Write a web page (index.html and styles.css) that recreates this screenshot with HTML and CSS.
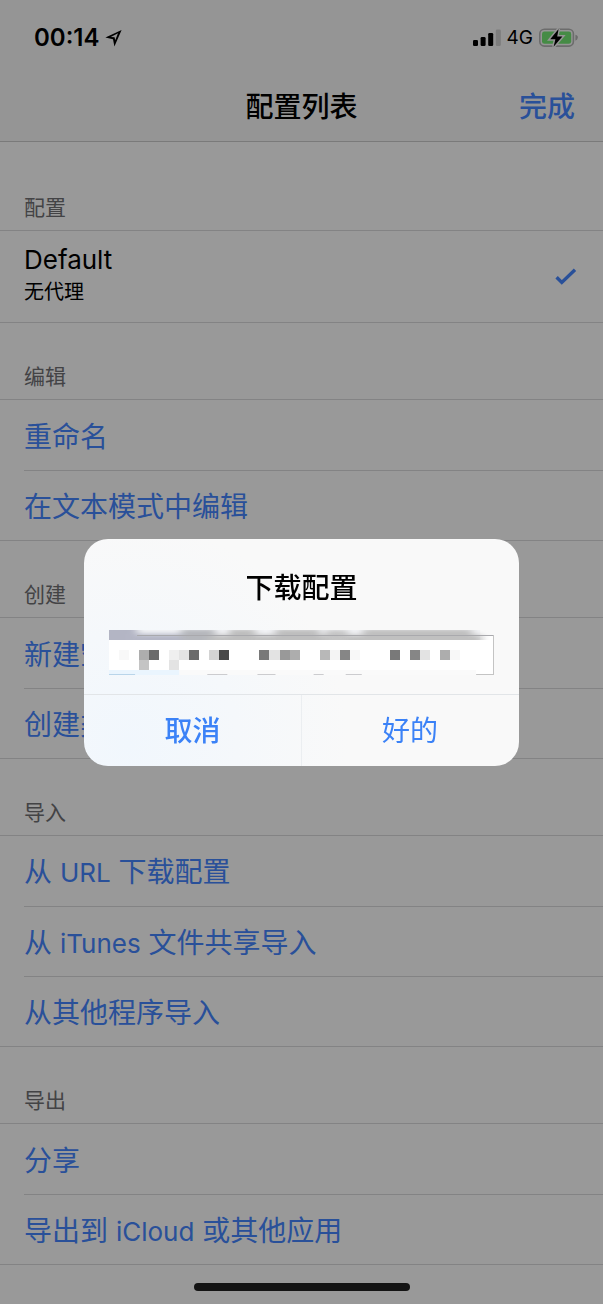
FILE: index.html
```html
<!DOCTYPE html>
<html lang="zh-CN">
<head>
<meta charset="utf-8">
<meta name="viewport" content="width=device-width, initial-scale=1">
<title>配置列表</title>
<link rel="stylesheet" href="styles.css">
</head>
<body>
<div class="screen">
  <header class="header">
    <div class="status">
      <div class="status-left">
        <span class="time">00:14</span>
        <svg class="icon-location" viewBox="0 0 18 18" aria-hidden="true"><path fill-rule="evenodd" d="M16.6 1 9.4 17.6 8 10.2 0.4 8.6ZM13 4.2 5.8 8 9.6 8.3 10.2 11.2Z"/></svg>
      </div>
      <div class="status-right">
        <svg class="icon-signal" viewBox="0 0 28 17" aria-hidden="true"><rect x="0" y="11" width="5" height="6" rx="1.3"/><rect x="7.6" y="8" width="5" height="9" rx="1.3"/><rect x="15.2" y="4" width="5" height="13" rx="1.3"/><rect class="signal-off" x="22.8" y="0.5" width="5" height="16.5" rx="1.3"/></svg>
        <span class="network">4G</span>
        <svg class="icon-battery" viewBox="0 0 40 20" aria-hidden="true"><rect class="battery-case" x="0.8" y="1.3" width="33.6" height="16.8" rx="4.5"/><rect class="battery-fill" x="3" y="3.6" width="29.2" height="12.2" rx="2.4"/><path class="battery-tip" d="M36.4 6.8q3 .8 2.4 3-.1 2-2.4 3Z"/><path class="battery-bolt" d="M19.6 1 11.2 11.2h5.2L14.6 18.8 23.4 8.4h-5.2Z"/></svg>
      </div>
    </div>
    <nav class="navbar">
      <h1 class="title">配置列表</h1>
      <button class="done" type="button">完成</button>
    </nav>
  </header>

  <main>
    <section>
      <h2 class="label label-first">配置</h2>
      <div class="group">
        <button class="profile" type="button" aria-pressed="true">
          <span class="profile-text"><span class="profile-name">Default</span><span class="profile-detail">无代理</span></span>
          <svg class="icon-check" viewBox="0 0 22 18" aria-hidden="true"><path d="M1.6 9.2 6.8 14.4 20 1.8"/></svg>
        </button>
      </div>
    </section>
    <section>
      <h2 class="label">编辑</h2>
      <div class="group">
        <button class="row" type="button">重命名</button>
        <button class="row" type="button">在文本模式中编辑</button>
      </div>
    </section>
    <section>
      <h2 class="label">创建</h2>
      <div class="group">
        <button class="row" type="button">新建空</button>
        <button class="row" type="button">创建类</button>
      </div>
    </section>
    <section>
      <h2 class="label">导入</h2>
      <div class="group">
        <button class="row" type="button">从 <span class="latin">URL</span> 下载配置</button>
        <button class="row" type="button">从 <span class="latin">iTunes</span> 文件共享导入</button>
        <button class="row" type="button">从其他程序导入</button>
      </div>
    </section>
    <section>
      <h2 class="label">导出</h2>
      <div class="group">
        <button class="row" type="button">分享</button>
        <button class="row" type="button">导出到 <span class="latin">iCloud</span> 或其他应用</button>
      </div>
    </section>
  </main>
</div>

<div class="overlay">
  <form class="alert" role="dialog" aria-labelledby="alert-title">
    <div class="alert-body">
      <h2 class="alert-title" id="alert-title">下载配置</h2>
      <div class="field">
        <input class="field-input" type="text" aria-labelledby="alert-title">
        <svg class="mosaic" viewBox="0 0 383 45" preserveAspectRatio="none" aria-hidden="true">
          <defs>
            <filter id="soft" x="-10%" y="-50%" width="120%" height="200%"><feGaussianBlur stdDeviation="4 2"/></filter>
            <clipPath id="band"><rect width="383" height="10"/></clipPath>
          </defs>
          <g clip-path="url(#band)">
            <rect width="370" height="10" fill="#f2f3f6"/>
            <g filter="url(#soft)">
              <rect x="-10" y="-6" width="38" height="24" fill="#b3b5c4"/>
              <rect x="20" y="4" width="60" height="14" fill="#b5b7c6"/>
              <rect x="72" y="-1" width="34" height="19" fill="#b5b7bc"/>
              <rect x="100" y="5" width="272" height="13" fill="#c0c0c0"/>
              <rect x="120" y="-1" width="26" height="19" fill="#bebebe"/>
              <rect x="166" y="-1" width="44" height="19" fill="#bebebe"/>
              <rect x="216" y="0" width="22" height="18" fill="#c4c4c4"/>
              <rect x="253" y="-1" width="109" height="19" fill="#c0c0c0"/>
            </g>
            <path d="M28 5.5H383" stroke="#a9a9ad" stroke-width="1"/>
          </g>
          <rect y="10" width="381" height="30" fill="#fff"/>
          <rect y="40" width="366" height="5" fill="#fafafa"/>
          <rect y="40" width="70" height="5" fill="#eaf5fe"/>
          <path d="M0 44.5H26" stroke="#b9d5ea" stroke-width="1"/>
          <path d="M98 44.5H118M148 44.5H166M204 44.5H214M236 44.5H252" stroke="#cccccf" stroke-width="1"/>
          <g shape-rendering="crispEdges">
            <path fill="#f8f8f8" d="M10 20h10v10H10zM240 20h10v10h-10zM340 20h10v10h-10z"/>
            <path fill="#f4f4f4" d="M220 20h10v10h-10z"/>
            <path fill="#efefef" d="M60 20h10v10H60z"/>
            <path fill="#e3e3e3" d="M70 20h10v10H70zM60 30h10v10H60zM160 20h10v10h-10zM310 20h10v10h-10z"/>
            <path fill="#d3d3d3" d="M100 20h10v10h-10z"/>
            <path fill="#c4c4c4" d="M30 30h10v10H30z"/>
            <path fill="#b8b8b8" d="M210 20h10v10h-10z"/>
            <path fill="#adadad" d="M30 20h10v10H30zM180 20h10v10h-10zM330 20h10v10h-10z"/>
            <path fill="#999" d="M170 20h10v10h-10z"/>
            <path fill="#868686" d="M230 20h10v10h-10zM300 20h10v10h-10z"/>
            <path fill="#797979" d="M150 20h10v10h-10zM280 20h10v10h-10z"/>
            <path fill="#6b6b6b" d="M40 20h10v10H40zM80 20h10v10H80z"/>
            <path fill="#484848" d="M110 20h10v10h-10z"/>
          </g>
        </svg>
      </div>
    </div>
    <div class="alert-actions">
      <button class="action action-cancel" type="button">取消</button>
      <button class="action" type="button">好的</button>
    </div>
  </form>
</div>
<div class="home-indicator"></div>
</body>
</html>
```

FILE: styles.css
```css
* {
  box-sizing: border-box;
}

body {
  margin: 0;
  background: #fff;
  color: #000;
  font-family: Inter, "Noto Sans CJK SC", sans-serif;
}

h1,
h2 {
  margin: 0;
}

button {
  margin: 0;
  padding: 0;
  border: 0;
  background: none;
  color: #4585ff;
  font: inherit;
  text-align: left;
}

.header {
  background: #f9f9f9;
  border-bottom: 1px solid #cbcbcb;
}

.status {
  display: flex;
  justify-content: space-between;
  align-items: center;
  height: 72px;
  padding: 3px 24px 0 34px;
}

.status-left,
.status-right {
  display: flex;
  align-items: center;
  gap: 6px;
}

.time {
  font-size: 24px;
  line-height: 28px;
  font-weight: 600;
}

.network {
  font-size: 19px;
  line-height: 24px;
}

.icon-location {
  width: 18px;
  height: 18px;
}

.icon-signal {
  width: 28px;
  height: 17px;
}

.signal-off {
  fill: #d0d0d0;
}

.icon-battery {
  width: 40px;
  height: 20px;
}

.battery-case {
  fill: none;
  stroke: #b4b4b4;
  stroke-width: 1.6;
}

.battery-fill {
  fill: #74e874;
}

.battery-tip {
  fill: #b4b4b4;
}

.battery-bolt {
  stroke: #f9f9f9;
  stroke-width: 3;
  paint-order: stroke;
}

.navbar {
  display: grid;
  grid-template-columns: 1fr auto 1fr;
  align-items: center;
  height: 69px;
  padding: 1px 28px 0;
}

.title {
  grid-column: 2;
  font-size: 28px;
  line-height: 40px;
  font-weight: 500;
}

.done {
  justify-self: end;
  font-size: 28px;
  line-height: 40px;
  font-weight: 500;
}

.label {
  display: flex;
  align-items: flex-end;
  height: 76px;
  padding: 0 24px 7px;
  color: #707074;
  font-size: 21px;
  line-height: 30px;
  font-weight: 400;
}

.label-first {
  height: 88px;
}

.group {
  border-top: 1px solid #dadadd;
  border-bottom: 1px solid #dadadd;
}

.profile {
  display: flex;
  justify-content: space-between;
  align-items: center;
  width: 100%;
  height: 91px;
  padding: 0 26px 0 24px;
  color: #000;
}

.profile-text {
  display: flex;
  flex-direction: column;
  padding-bottom: 3px;
}

.profile-name {
  font-size: 26px;
  line-height: 34px;
}

.profile-detail {
  font-size: 20px;
  line-height: 30px;
}

.icon-check {
  width: 22px;
  height: 18px;
  fill: none;
  stroke: #4585ff;
  stroke-width: 3.4;
}

.row {
  display: block;
  width: calc(100% - 24px);
  height: 70px;
  margin-left: 24px;
  padding-top: 3px;
  font-size: 28px;
  line-height: 40px;
}

.row + .row {
  border-top: 1px solid #dadadd;
}

.latin {
  font-size: 26px;
}

.overlay {
  position: fixed;
  inset: 0;
  display: flex;
  justify-content: center;
  align-items: center;
  background: rgba(0, 0, 0, 0.4);
}

.alert {
  width: 72%;
  max-width: 540px;
  overflow: hidden;
  border-radius: 24px;
  background: radial-gradient(circle at 10% 90%, #f1f7fd, #f9f9f9 50%);
}

.alert-body {
  display: flex;
  flex-direction: column;
  gap: 27px;
  padding: 29px 25px 19px;
}

.alert-title {
  font-size: 28px;
  line-height: 40px;
  font-weight: 500;
  text-align: center;
}

.field {
  position: relative;
  height: 40px;
}

.field-input {
  display: block;
  width: 100%;
  height: 40px;
  padding: 0 8px;
  border: 1px solid #c4c4c4;
  border-radius: 0;
  background: #fff;
  font: inherit;
}

.mosaic {
  position: absolute;
  left: 0;
  bottom: 0;
  width: 100%;
  height: 45px;
  pointer-events: none;
}

.alert-actions {
  display: grid;
  grid-template-columns: 1fr 1fr;
  border-top: 1px solid #e2e5e8;
}

.action {
  height: 71px;
  padding-top: 2px;
  color: #3b82f7;
  font-size: 28px;
  line-height: 40px;
  text-align: center;
}

.action-cancel {
  border-right: 1px solid #ebeef1;
  font-weight: 500;
}

.home-indicator {
  position: fixed;
  bottom: 13px;
  left: 50%;
  width: 216px;
  height: 8px;
  margin-left: -108px;
  border-radius: 4px;
  background: #141414;
}
```
